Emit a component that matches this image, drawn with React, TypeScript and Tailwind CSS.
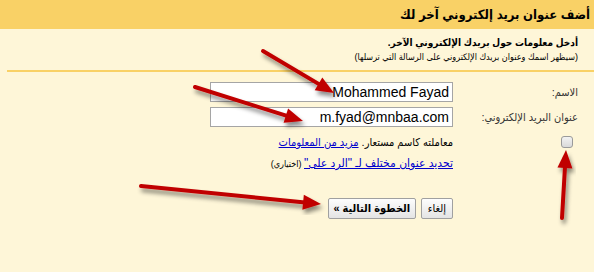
import React from "react";

const font = { fontFamily: '"Liberation Sans", "DejaVu Sans Condensed", "DejaVu Sans", sans-serif' };

type ArrowProps = { x1: number; y1: number; x2: number; y2: number };

// arrow annotation: shaft + triangular head pointing at (x2,y2)
function Arrow({ x1, y1, x2, y2 }: ArrowProps) {
  const dx = x2 - x1;
  const dy = y2 - y1;
  const len = Math.sqrt(dx * dx + dy * dy);
  const ux = dx / len;
  const uy = dy / len;
  const headLen = 18;
  const headW = 7.5;
  const bx = x2 - ux * headLen;
  const by = y2 - uy * headLen;
  const px = -uy * headW;
  const py = ux * headW;
  return (
    <g filter="url(#shadow)">
      <line x1={x1} y1={y1} x2={bx + ux * 2} y2={by + uy * 2} stroke="#c00000" strokeWidth={4} strokeLinecap="round" />
      <polygon points={`${x2},${y2} ${bx + px},${by + py} ${bx - px},${by - py}`} fill="#c00000" />
    </g>
  );
}

export default function App() {
  return (
    <div className="relative w-[594px] h-[272px] overflow-hidden bg-[#fef6d8] text-black" style={font} dir="rtl">
      {/* header */}
      <div className="h-[29px] bg-[#f9d166] flex items-center pr-[4px]">
        <h1 className="text-[13px] font-bold leading-none">أضف عنوان بريد إلكتروني آخر لك</h1>
      </div>

      {/* intro */}
      <div className="pr-[16px] pt-[7px] ml-[7px] pb-[6px] border-b-2 border-[#f9d166]">
        <p className="text-[10px] font-bold leading-[14px]">أدخل معلومات حول بريدك الإلكتروني الآخر.</p>
        <p className="text-[9px] leading-[14px]">(سيظهر اسمك وعنوان بريدك الإلكتروني على الرسالة التي ترسلها)</p>
      </div>

      {/* form */}
      <div className="pr-[16px] pt-[10px] grid grid-cols-[125px_243px] gap-y-[5px] text-[11px]">
        <label className="flex items-center text-[#333]">الاسم:</label>
        <div className="h-[20px] bg-white border border-[#a5a5a5] flex items-center px-[3px] text-[14px]" dir="ltr">
          <span className="ml-auto">Mohammed Fayad</span>
        </div>

        <label className="flex items-center text-[#333]">عنوان البريد الإلكتروني:</label>
        <div className="h-[20px] bg-white border border-[#a5a5a5] flex items-center px-[3px] text-[14px]" dir="ltr">
          <span className="ml-auto">m.fyad@mnbaa.com</span>
        </div>

        <div className="flex items-center pr-[5px] pt-[2px]">
          <span className="w-[12px] h-[12px] rounded-[3px] border border-[#9a9a9a] bg-gradient-to-b from-[#f2f2f2] to-[#d9d9d9]" />
        </div>
        <div className="pt-[2px] leading-[16px] whitespace-nowrap">
          <span>معاملته كاسم مستعار. </span>
          <a className="text-[#0000cc] underline">مزيد من المعلومات</a>
        </div>

        <div />
        <div className="leading-[16px] whitespace-nowrap text-[12px]">
          <a className="text-[#0000cc] underline">تحديد عنوان مختلف لـ "الرد على"</a>
          <span className="text-[9px]"> (اختياري)</span>
        </div>

        <div />
        <div className="pt-[21px] flex gap-[5px]">
          <button className="h-[21px] px-[6px] text-[11px] border border-[#a0a0a0] rounded-[2px] bg-gradient-to-b from-[#fdfdfd] to-[#e4e4e4]">إلغاء</button>
          <button className="h-[21px] w-[88px] text-[11px] font-bold border border-[#a0a0a0] rounded-[2px] bg-gradient-to-b from-[#fdfdfd] to-[#e4e4e4]">الخطوة التالية »</button>
        </div>
      </div>

      {/* annotations */}
      <svg className="absolute inset-0 pointer-events-none" width={594} height={272}>
        <defs>
          <filter id="shadow" x="-20%" y="-20%" width="140%" height="140%">
            <feDropShadow dx="2" dy="4" stdDeviation="2" floodColor="#000" floodOpacity="0.45" />
          </filter>
        </defs>
        <Arrow x1={263} y1={51} x2={334} y2={93} />
        <Arrow x1={195} y1={87} x2={303} y2={121} />
        <Arrow x1={141} y1={186} x2={321} y2={204} />
        <Arrow x1={562} y1={218} x2={566} y2={150} />
      </svg>
    </div>
  );
}
